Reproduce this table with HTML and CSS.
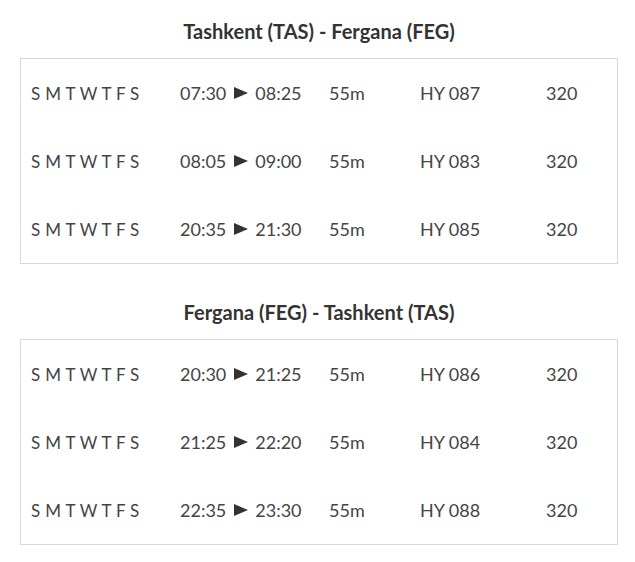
FILE: index.html
```html
<!DOCTYPE html>
<html>
<head>
<meta charset="utf-8">
<link rel="stylesheet" href="styles.css">
</head>
<body>
<div class="page">
  <section class="route">
    <h2 class="route-title">Tashkent (TAS) - Fergana (FEG)</h2>
    <div class="schedule">
      <div class="flight"><span class="days">S M T W T F S</span><span class="time">07:30<svg class="arrow" viewBox="0 0 14 12"><path d="M0 0L14 6L0 12Z"/></svg>08:25</span><span class="dur">55m</span><span class="num">HY 087</span><span class="ac">320</span></div>
      <div class="flight"><span class="days">S M T W T F S</span><span class="time">08:05<svg class="arrow" viewBox="0 0 14 12"><path d="M0 0L14 6L0 12Z"/></svg>09:00</span><span class="dur">55m</span><span class="num">HY 083</span><span class="ac">320</span></div>
      <div class="flight"><span class="days">S M T W T F S</span><span class="time">20:35<svg class="arrow" viewBox="0 0 14 12"><path d="M0 0L14 6L0 12Z"/></svg>21:30</span><span class="dur">55m</span><span class="num">HY 085</span><span class="ac">320</span></div>
    </div>
  </section>
  <section class="route">
    <h2 class="route-title">Fergana (FEG) - Tashkent (TAS)</h2>
    <div class="schedule">
      <div class="flight"><span class="days">S M T W T F S</span><span class="time">20:30<svg class="arrow" viewBox="0 0 14 12"><path d="M0 0L14 6L0 12Z"/></svg>21:25</span><span class="dur">55m</span><span class="num">HY 086</span><span class="ac">320</span></div>
      <div class="flight"><span class="days">S M T W T F S</span><span class="time">21:25<svg class="arrow" viewBox="0 0 14 12"><path d="M0 0L14 6L0 12Z"/></svg>22:20</span><span class="dur">55m</span><span class="num">HY 084</span><span class="ac">320</span></div>
      <div class="flight"><span class="days">S M T W T F S</span><span class="time">22:35<svg class="arrow" viewBox="0 0 14 12"><path d="M0 0L14 6L0 12Z"/></svg>23:30</span><span class="dur">55m</span><span class="num">HY 088</span><span class="ac">320</span></div>
    </div>
  </section>
</div>
</body>
</html>
```
FILE: styles.css
```css
html, body {
  margin: 0;
  padding: 0;
  background: #fff;
}
body {
  font-family: "Lato", "DejaVu Sans", sans-serif;
  color: #444;
}
.page {
  width: 598px;
  margin-left: 20px;
  padding-top: 19px;
}
.route {
  margin-bottom: 36px;
}
.route-title {
  margin: 0 0 15px;
  font-size: 20px;
  line-height: 24px;
  font-weight: 700;
  text-align: center;
  color: #333;
}
.schedule {
  border: 1px solid #d9d9d9;
}
.flight {
  display: grid;
  grid-template-columns: 149px 149px 91px 126px auto;
  align-items: center;
  height: 68px;
  padding-left: 10px;
  font-size: 18px;
}
.days {
  font-size: 17px;
  letter-spacing: 0.3px;
}
.time {
  display: flex;
  align-items: center;
}
.arrow {
  width: 14px;
  height: 12px;
  margin: 0 7px 0 8px;
  fill: #333;
}
```
